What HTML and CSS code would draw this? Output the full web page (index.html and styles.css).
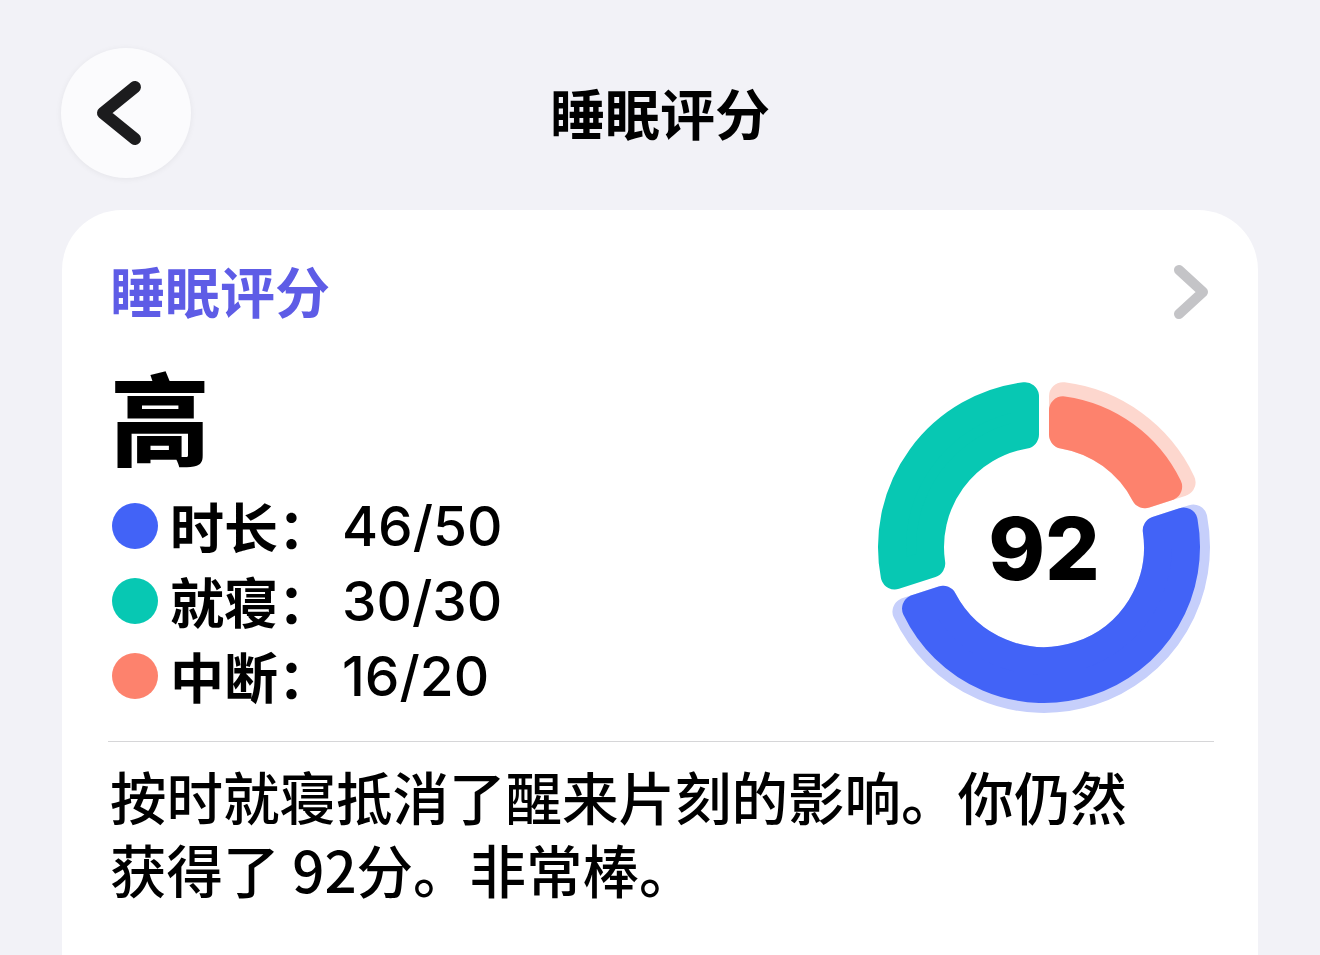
FILE: index.html
```html
<!DOCTYPE html>
<html lang="zh-CN">
<head>
  <meta charset="UTF-8" />
  <meta name="viewport" content="width=device-width, initial-scale=1.0"/>
  <title>睡眠评分</title>
  <link rel="stylesheet" href="styles.css">
</head>
<body>
  <div class="topbar">
    <button class="back-btn" aria-label="返回">
      <svg width="130" height="130" viewBox="0 0 130 130">
        <polyline points="74,39 42,65 74,91" fill="none" stroke="#1c1c1e" stroke-width="12" stroke-linecap="round" stroke-linejoin="round"/>
      </svg>
    </button>
    <h1>睡眠评分</h1>
    <div></div>
  </div>

  <div class="card">
    <div class="card-head">
      <h2>睡眠评分</h2>
      <svg class="chevron" width="40" height="56" viewBox="0 0 40 56">
        <polyline points="9,6 33,28 9,50" fill="none" stroke="#c4c4c7" stroke-width="10" stroke-linecap="round" stroke-linejoin="round"/>
      </svg>
    </div>

    <div class="summary">
      <div class="summary-left">
        <div class="grade">高</div>
        <ul class="legend">
          <li><span class="dot dot-blue"></span><span class="label">时长：</span><span class="value">46/50</span></li>
          <li><span class="dot dot-teal"></span><span class="label">就寝：</span><span class="value">30/30</span></li>
          <li><span class="dot dot-salmon"></span><span class="label">中断：</span><span class="value">16/20</span></li>
        </ul>
      </div>

      <svg class="ring" width="340" height="340" viewBox="0 0 340 340">
        <g stroke-width="28" stroke-linejoin="round">
          <!-- track halos -->
          <path fill="#c6cffb" stroke="#c6cffb" d="M319.29 141.47 A152 152 0 0 1 32.44 234.66 L68.96 222.8 A114 114 0 0 0 282.77 153.33 Z"/>
          <path fill="#fdd7ce" stroke="#fdd7ce" d="M189 19.19 A152 152 0 0 1 307.56 105.34 L271.04 117.2 A114 114 0 0 0 189 57.6 Z"/>
          <!-- scores -->
          <path fill="#4263f7" stroke="#4263f7" d="M309.71 144.58 A142 142 0 0 1 42.04 231.56 L68.96 222.8 A114 114 0 0 0 282.77 153.33 Z"/>
          <path fill="#07c8b3" stroke="#07c8b3" d="M20.71 198.53 A152 152 0 0 1 151 19.19 L151 57.6 A114 114 0 0 0 57.23 186.67 Z"/>
          <path fill="#fd826d" stroke="#fd826d" d="M189 33.31 A138 138 0 0 1 294.13 109.69 L271.04 117.2 A114 114 0 0 0 189 57.6 Z"/>
        </g>
        <text class="ring-score" x="170" y="172" text-anchor="middle" dominant-baseline="central">92</text>
      </svg>
    </div>

    <div class="divider"></div>

    <p class="note">按时就寝抵消了醒来片刻的影响。你仍然获得了 92分。非常棒。</p>
  </div>
</body>
</html>
```

FILE: styles.css
```css
html, body {
  height: 100%;
}

body {
  margin: 0;
  background: #f2f2f7;
  font-family: "Noto Sans CJK SC", "Noto Sans", sans-serif;
  color: #000;
  overflow: hidden;
}

.topbar {
  display: grid;
  grid-template-columns: 1fr auto 1fr;
  align-items: center;
  padding: 48px 61px 0 61px;
}

.back-btn {
  width: 130px;
  height: 130px;
  padding: 0;
  border: none;
  border-radius: 50%;
  background: #fbfbfd;
  box-shadow: 0 1px 6px rgba(0, 0, 0, 0.06);
  display: flex;
  cursor: pointer;
}

.topbar h1 {
  margin: 0 0 4px 0;
  font-size: 55px;
  font-weight: 700;
  line-height: 1;
  text-align: center;
}

.card {
  margin: 32px 62px 0 62px;
  background: #fff;
  border-radius: 60px;
  padding: 46px 44px 60px 48px;
  min-height: 800px;
}

.card-head {
  display: flex;
  justify-content: space-between;
  align-items: center;
  height: 66px;
}

.card-head h2 {
  margin: 0;
  font-size: 55px;
  font-weight: 700;
  line-height: 66px;
  color: #5e5ce6;
}

.chevron {
  margin: 6px 4px 0 0;
}

.summary {
  display: flex;
  justify-content: space-between;
  align-items: flex-start;
  margin-top: 38px;
}

.grade {
  font-size: 100px;
  font-weight: 900;
  line-height: 110px;
}

.legend {
  list-style: none;
  margin: 18px 0 0 0;
  padding: 0;
}

.legend li {
  display: flex;
  align-items: center;
  height: 75px;
}

.dot {
  width: 46px;
  height: 46px;
  border-radius: 50%;
  margin: 0 12px 0 2px;
}

.dot-blue { background: #4263f7; }
.dot-teal { background: #07c8b3; }
.dot-salmon { background: #fd826d; }

.label {
  font-size: 54px;
  font-weight: 700;
}

.value {
  font-family: "Inter", "Noto Sans", sans-serif;
  font-size: 55px;
  font-weight: 500;
  margin-left: 10px;
}

.ring {
  margin-top: 17px;
}

.ring-score {
  font-family: "Inter", "Noto Sans", sans-serif;
  font-size: 86px;
  font-weight: 800;
  fill: #000;
}

.divider {
  height: 1px;
  background: #d6d6d8;
  margin: 24px 0 0 -2px;
}

.note {
  margin: 17px 0 0 0;
  max-width: 1040px;
  font-size: 56.5px;
  font-weight: 500;
  line-height: 73px;
}
```
